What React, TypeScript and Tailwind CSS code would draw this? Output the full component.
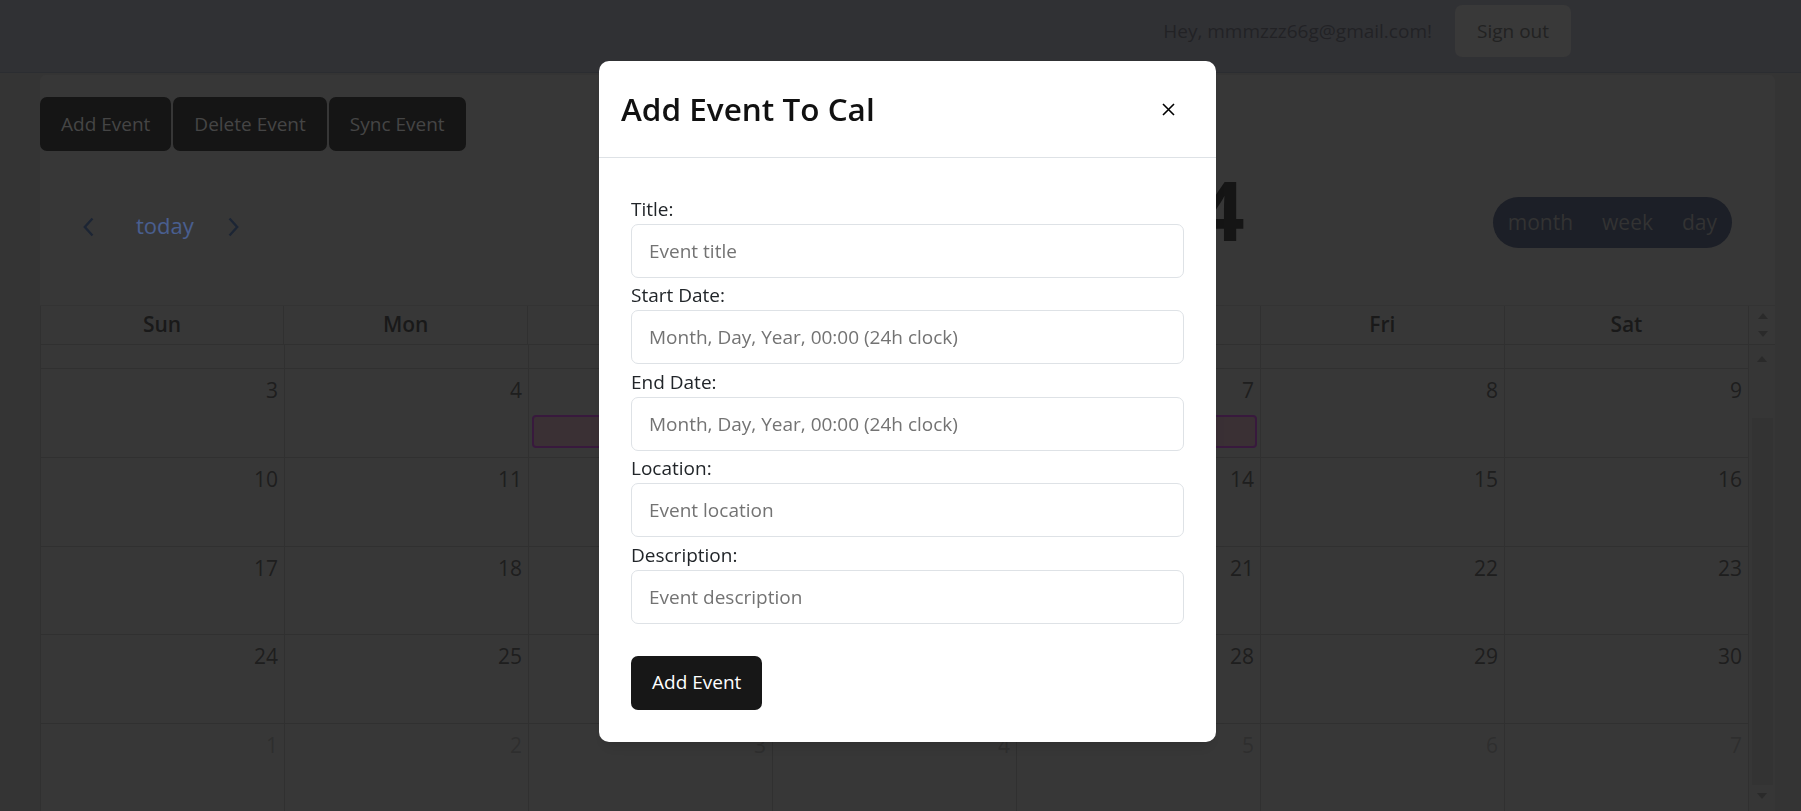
import React from 'react';

const weekDays = ['Sun', 'Mon', 'Tue', 'Wed', 'Thu', 'Fri', 'Sat'];

const weeks: { day: number; other?: boolean }[][] = [
  [3, 4, 5, 6, 7, 8, 9].map((d) => ({ day: d })),
  [10, 11, 12, 13, 14, 15, 16].map((d) => ({ day: d })),
  [17, 18, 19, 20, 21, 22, 23].map((d) => ({ day: d })),
  [24, 25, 26, 27, 28, 29, 30].map((d) => ({ day: d })),
  [1, 2, 3, 4, 5, 6, 7].map((d) => ({ day: d, other: true })),
];

const fields = [
  { label: 'Title:', placeholder: 'Event title' },
  { label: 'Start Date:', placeholder: 'Month, Day, Year, 00:00 (24h clock)' },
  { label: 'End Date:', placeholder: 'Month, Day, Year, 00:00 (24h clock)' },
  { label: 'Location:', placeholder: 'Event location' },
  { label: 'Description:', placeholder: 'Event description' },
];

function Chevron({ dir }: { dir: 'left' | 'right' }) {
  return (
    <svg width="11" height="20" viewBox="0 0 11 20" className="mt-[7.5px]">
      <path
        d={dir === 'left' ? 'M9.5 1.5 L1.8 10 L9.5 18.5' : 'M1.5 1.5 L9.2 10 L1.5 18.5'}
        fill="none"
        stroke="#303e57"
        strokeWidth="2.4"
      />
    </svg>
  );
}

function Triangle({ up }: { up?: boolean }) {
  return (
    <svg width="10" height="6" viewBox="0 0 10 6">
      <path d={up ? 'M0 6 L5 0 L10 6 Z' : 'M0 0 L5 6 L10 0 Z'} fill="#474747" />
    </svg>
  );
}

export default function App() {
  return (
    <div className="relative h-screen overflow-hidden bg-[#585858] font-['Open_Sans','Noto_Sans',sans-serif] text-[19px]">
      {/* Top bar */}
      <header className="h-[73px] pt-[5px] bg-[#515258] border-b border-[#494b52]">
        <div className="flex items-center justify-end h-[52px] pr-[230px]">
          <span className="text-[#393a3f] mr-[23px]">Hey, mmmzzz66g@gmail.com!</span>
          <button className="h-[52px] px-[22px] rounded-[7px] bg-[#5f5f5f] text-[#393939]">Sign out</button>
        </div>
      </header>

      {/* Calendar card */}
      <div className="ml-[40px] w-[1735px] mt-[2px] pt-[22px] bg-[#5d5d5d] rounded-t-[6px]">
        <div className="flex gap-[2px]">
          {['Add Event', 'Delete Event', 'Sync Event'].map((b) => (
            <button key={b} className="h-[53.5px] px-[21px] rounded-[7px] bg-[#232323] text-[#747474]">
              {b}
            </button>
          ))}
        </div>

        {/* Toolbar */}
        <div className="flex items-start h-[82px] mt-[17.5px]">
          <div className="flex items-start ml-[43px] mt-[41px]">
            <Chevron dir="left" />
            <span className="ml-[42px] text-[22px] leading-[33px] text-[#7b9eee]">today</span>
            <span className="ml-[34px]">
              <Chevron dir="right" />
            </span>
          </div>
          <h2 className="ml-auto mr-[248px] font-bold text-[83px] leading-[82px] text-[#232323] whitespace-nowrap">
            November 2024
          </h2>
          <div className="flex items-center gap-[29px] h-[51px] mt-[29px] mr-[43px] px-[15px] rounded-full bg-[#2f3441] text-[21px] text-[#555555]">
            <span>month</span>
            <span>week</span>
            <span>day</span>
          </div>
        </div>

        {/* Grid */}
        <div className="mt-[55px]">
          <div className="grid grid-cols-[repeat(7,1fr)_26px] h-[39px] border-t border-[#555555]">
            {weekDays.map((d, i) => (
              <div
                key={d}
                className={`flex items-center justify-center border-r border-[#505050] text-[21px] font-semibold text-[#2b2b2b] ${i === 0 ? 'border-l' : ''}`}
              >
                {d}
              </div>
            ))}
            <div className="flex flex-col items-center justify-center gap-[12px] pl-[2px]">
              <Triangle up />
              <Triangle />
            </div>
          </div>

          <div className="flex border-t border-[#505050]">
            <div className="w-[1709px] border-l border-[#505050]">
              <div className="grid grid-cols-7 h-[24px] border-b border-[#505050]">
                {weekDays.map((d) => (
                  <div key={d} className="border-r border-[#505050]" />
                ))}
              </div>
              {weeks.map((week, wi) => (
                <div key={wi} className="relative grid grid-cols-7 h-[88.8px] border-b border-[#505050]">
                  {week.map((c, ci) => (
                    <div
                      key={ci}
                      className={`border-r border-[#505050] pt-[6px] pr-[6px] text-right text-[21px] leading-[31px] ${c.other ? 'text-[#4e4e4e]' : 'text-[#323232]'}`}
                    >
                      {c.day}
                    </div>
                  ))}
                  {wi === 0 && (
                    <div className="absolute top-[46px] left-[calc(200%/7_+_3px)] w-[calc(300%/7_-_7px)] h-[33px] rounded-[4px] border-2 border-[#5e2b66] bg-[#615058]" />
                  )}
                </div>
              ))}
            </div>

            {/* Scrollbar */}
            <div className="w-[26px] flex flex-col items-center bg-[#5a5a5a]">
              <div className="mt-[11px]">
                <Triangle up />
              </div>
              <div className="mt-[56px] w-[21px] h-[367px] bg-[#555555]" />
              <div className="mt-[8px]">
                <Triangle />
              </div>
            </div>
          </div>
        </div>
      </div>

      {/* Modal */}
      <div className="fixed inset-0 flex justify-center items-start pl-[40px] pr-[26px] pt-[61px] bg-black/40">
        <div className="w-[617px] bg-white rounded-[10px] shadow-lg">
          <div className="flex items-center justify-between h-[97px] pl-[22px] pr-[32px] border-b border-[#dee2e6]">
            <h1 className="text-[31.5px] leading-[48px] font-semibold text-[#111111]">Add Event To Cal</h1>
            <button className="flex items-center justify-center w-[32px] h-[32px]">
              <svg width="13" height="13" viewBox="0 0 13 13">
                <path d="M1 1 L12 12 M12 1 L1 12" stroke="#000" strokeWidth="1.6" />
              </svg>
            </button>
          </div>

          <div className="px-8 pt-[33px] pb-8">
            {fields.map((f) => (
              <div key={f.label}>
                <label className="block pt-[3.5px] leading-[29px] text-[#212529]">{f.label}</label>
                <input
                  type="text"
                  placeholder={f.placeholder}
                  className="block w-full h-[54px] px-[17px] rounded-[7px] border border-[#dee2e6] text-[19px] text-[#212529] placeholder:text-[#737373] outline-none"
                />
              </div>
            ))}
            <button className="mt-8 h-[54px] px-[21px] rounded-[7px] bg-[#171717] text-white">Add Event</button>
          </div>
        </div>
      </div>
    </div>
  );
}
